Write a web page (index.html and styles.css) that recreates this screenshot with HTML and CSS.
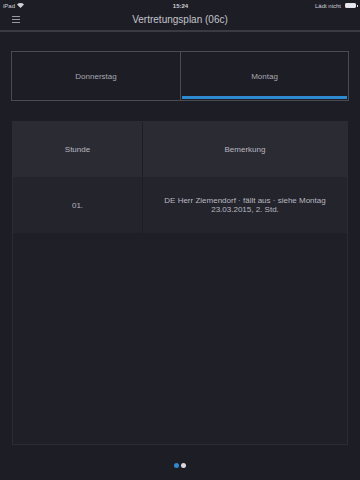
FILE: index.html
```html
<!DOCTYPE html>
<html lang="de">
<head>
  <meta charset="UTF-8">
  <title>Vertretungsplan</title>
  <link rel="stylesheet" href="styles.css">
</head>
<body>

  <!-- Status Bar -->
  <div class="statusbar">
    <div class="status-left">
      iPad
      <svg class="wifi" width="7" height="5" viewBox="0 0 14 10"><path d="M7 10 L0 3 A10 10 0 0 1 14 3 Z" fill="#d0d0d6"/></svg>
    </div>
    <div class="status-time">15:24</div>
    <div class="status-right">
      Lädt nicht
      <span class="battery"><span class="battery-fill"></span></span>
    </div>
  </div>

  <!-- Nav Bar -->
  <div class="navbar">
    <div class="burger"><span></span><span></span><span></span></div>
    <div class="title">Vertretungsplan (06c)</div>
  </div>

  <div class="content">
    <div class="tabs">
      <div class="tab">Donnerstag</div>
      <div class="tab active">Montag</div>
    </div>

    <div class="plan">
      <div class="row head">
        <div class="cell hour">Stunde</div>
        <div class="cell note">Bemerkung</div>
      </div>
      <div class="row">
        <div class="cell hour">01.</div>
        <div class="cell note">DE Herr Ziemendorf · fällt aus · siehe Montag<br>23.03.2015, 2. Std.</div>
      </div>
    </div>

    <div class="pager">
      <span class="dot on"></span>
      <span class="dot"></span>
    </div>
  </div>

</body>
</html>
```
FILE: styles.css
```css
* {
  box-sizing: border-box;
}

body {
  margin: 0;
  width: 360px;
  height: 480px;
  overflow: hidden;
  font-family: 'Liberation Sans', Arial, sans-serif;
  background-color: #1d1d25;
  color: #b4b4bc;
}

/* Status bar */
.statusbar {
  height: 11px;
  padding: 0 2px 0 3px;
  display: flex;
  align-items: center;
  justify-content: space-between;
  font-size: 6px;
  color: #d0d0d6;
}

.status-left,
.status-right {
  width: 80px;
  display: flex;
  align-items: center;
  gap: 2px;
}

.status-right {
  justify-content: flex-end;
}

.status-time {
  font-weight: bold;
}

.battery {
  position: relative;
  width: 11px;
  height: 5px;
  border: 1px solid #e0e0e6;
  border-radius: 1px;
  margin-left: 2px;
  margin-right: 2px;
}

.battery::after {
  content: "";
  position: absolute;
  right: -3px;
  top: 1px;
  width: 1px;
  height: 2px;
  background: #e0e0e6;
}

.battery-fill {
  display: block;
  height: 100%;
  background: #e8e8ee;
}

/* Nav bar */
.navbar {
  position: relative;
  height: 21px;
  display: flex;
  align-items: center;
  justify-content: center;
  border-bottom: 2px solid #3a3a42;
}

.burger {
  position: absolute;
  left: 12px;
  top: 5px;
  display: flex;
  flex-direction: column;
  gap: 2px;
}

.burger span {
  display: block;
  width: 8px;
  height: 1px;
  background: #9a9aa2;
}

.title {
  font-size: 10px;
  color: #c4c4cc;
  margin-top: -3px;
}

.content {
  padding: 19px 11px 0 11px;
}

/* Tabs */
.tabs {
  height: 50px;
  display: grid;
  grid-template-columns: 1fr 1fr;
  border: 1px solid #4a4a52;
}

.tab {
  position: relative;
  display: flex;
  align-items: center;
  justify-content: center;
  font-size: 8px;
  color: #a8a8b0;
}

.tab + .tab {
  border-left: 1px solid #4a4a52;
}

.tab.active::after {
  content: "";
  position: absolute;
  left: 1px;
  right: 1px;
  bottom: 1px;
  height: 3px;
  background: #2e8ad0;
}

/* Table */
.plan {
  margin: 20px 1px 0 1px;
  height: 324px;
  background: #1f1f27;
  border: 1px solid #2b2b33;
}

.row {
  display: grid;
  grid-template-columns: 129px 1fr;
  height: 56px;
  background: #24242c;
}

.row.head {
  height: 55px;
  background: #2b2b33;
}

.cell {
  display: flex;
  align-items: center;
  justify-content: center;
  text-align: center;
  font-size: 8px;
  line-height: 9px;
  color: #b8b8c0;
}

.cell.note {
  border-left: 1px solid #1d1d25;
}

/* Pager */
.pager {
  display: flex;
  justify-content: center;
  gap: 2px;
  margin-top: 18px;
}

.dot {
  width: 5px;
  height: 5px;
  border-radius: 50%;
  background: #d8d8de;
}

.dot.on {
  background: #2e8ad0;
}
```
